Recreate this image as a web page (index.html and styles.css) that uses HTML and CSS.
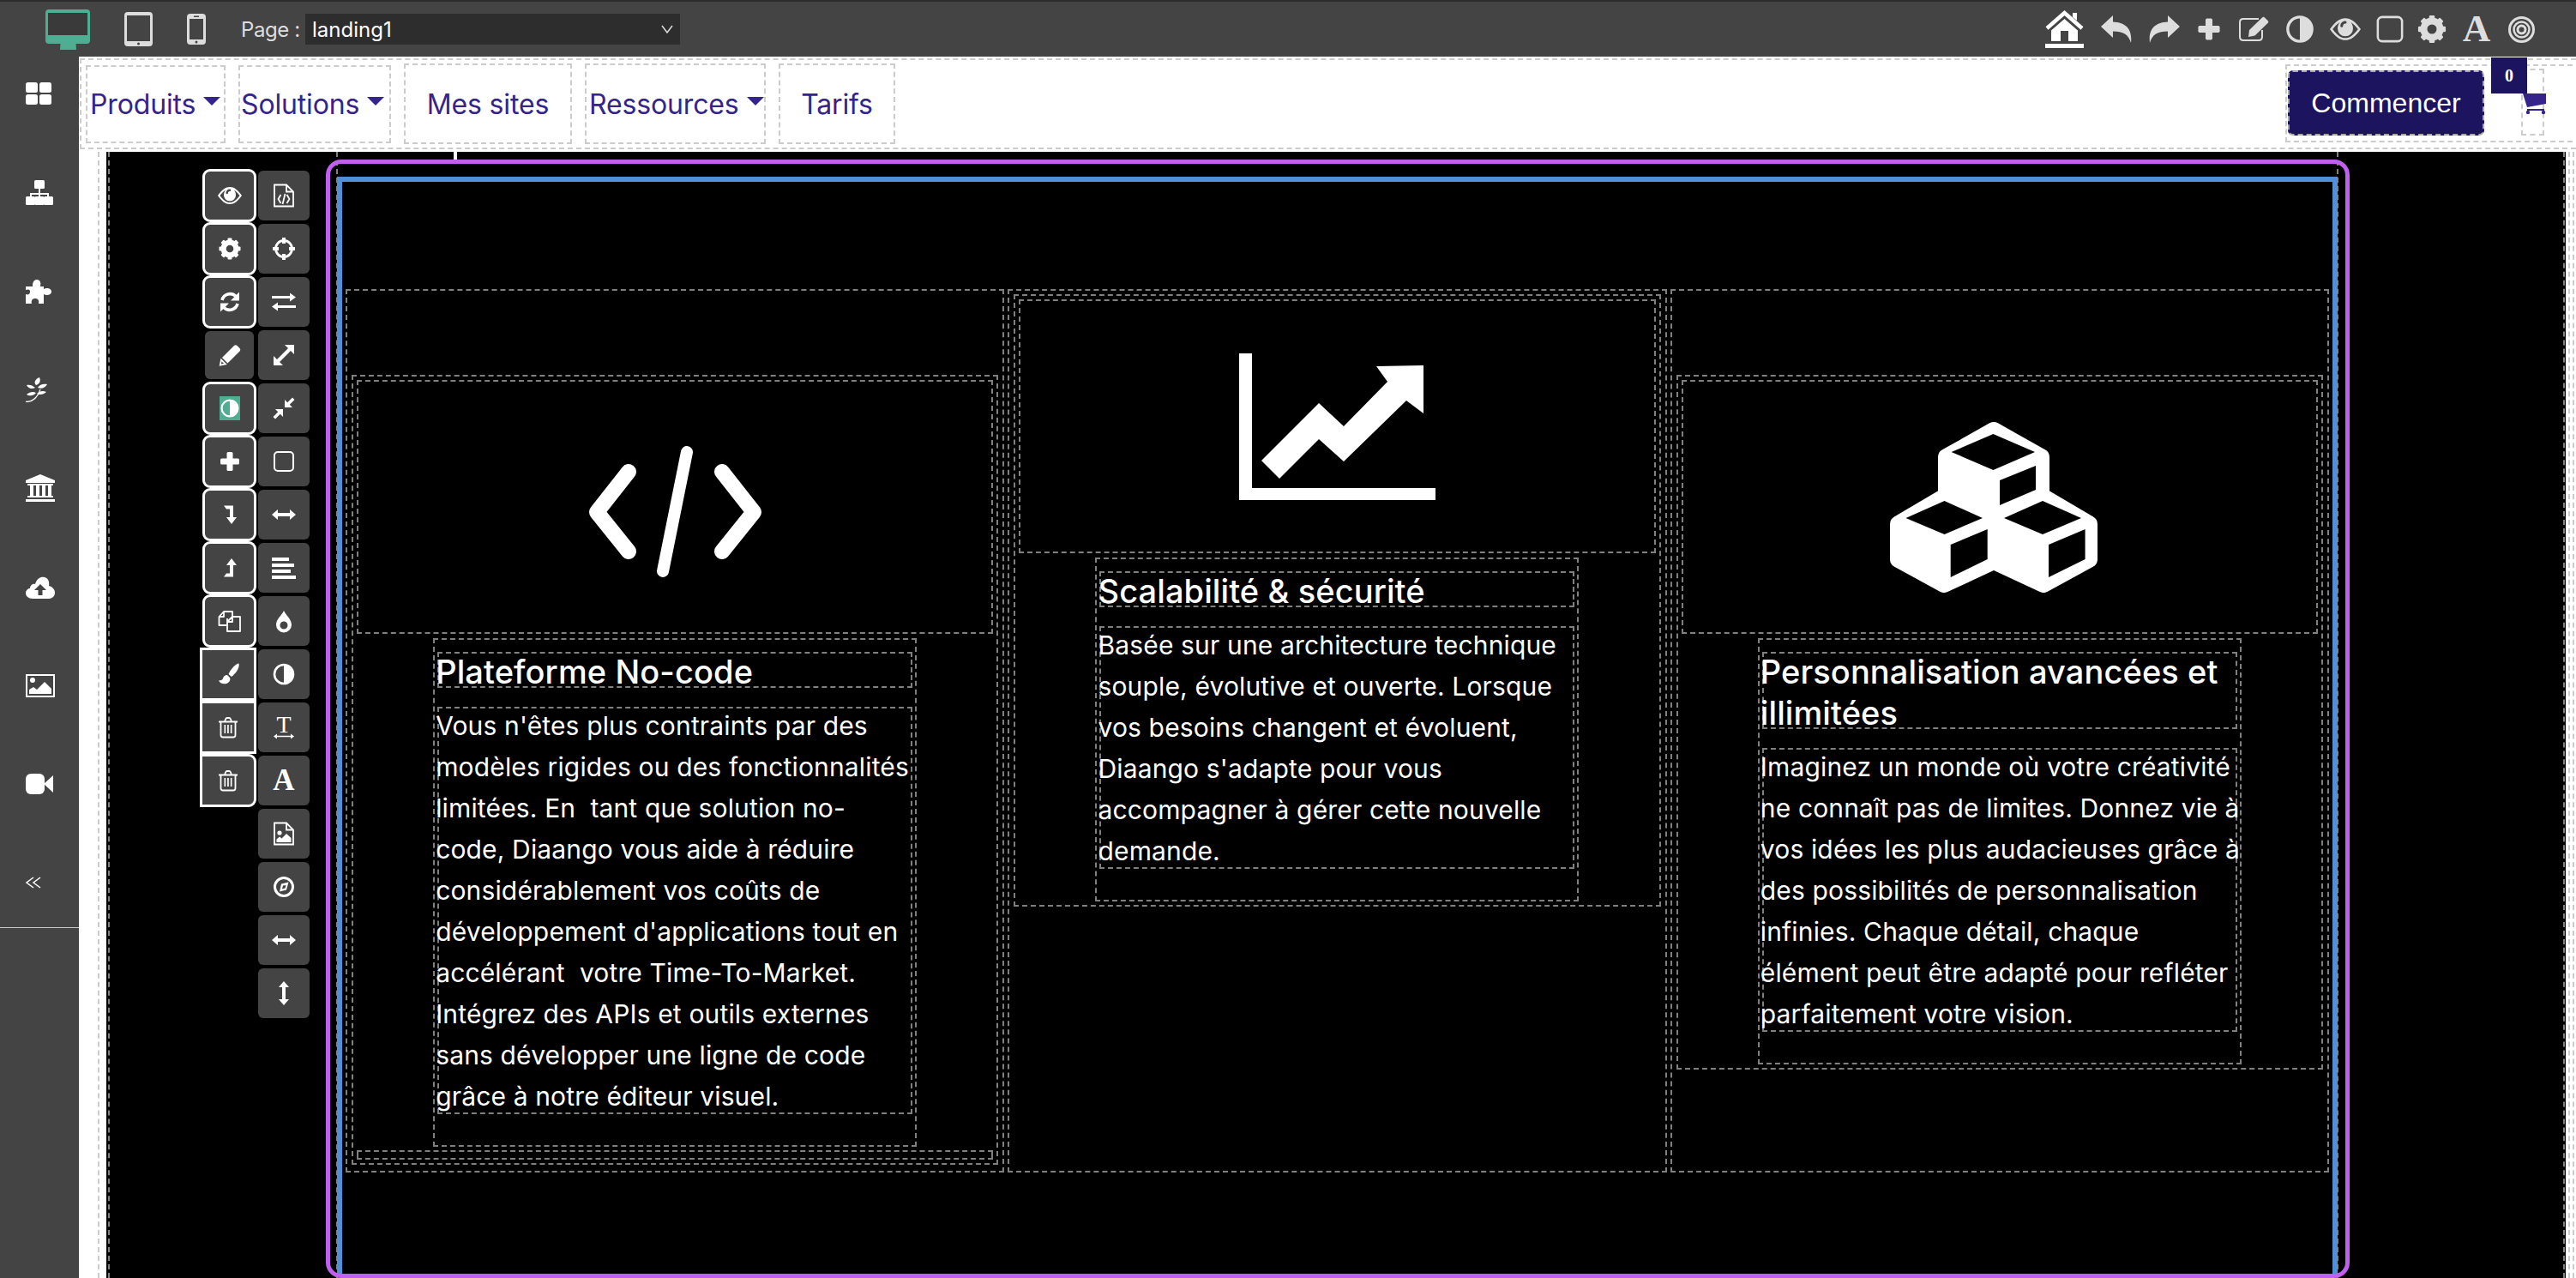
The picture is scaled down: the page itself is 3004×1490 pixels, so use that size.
FILE: index.html
```html
<!DOCTYPE html>
<html lang="fr">
<head>
<meta charset="utf-8">
<title>Diaango – landing1</title>
<link rel="stylesheet" href="styles.css">
</head>
<body>
<svg class="sprite" xmlns="http://www.w3.org/2000/svg">
  <symbol id="i-eye" viewBox="0 0 28 28"><path fill-rule="evenodd" d="M0 14C5 7 9 4 14 4s9 3 14 10c-5 7-9 10-14 10S5 21 0 14zM2.500 14c4 5.500 7.500 8 11.500 8s7.500-2.500 11.500-8c-2.200-3-4.300-5-6.500-6.300 1.200 1.500 2 3.500 2 5.800a7 7 0 0 1-14 0c0-2.300.8-4.300 2-5.800C6.800 9 4.700 11 2.500 14zM9.500 11a1.200 1.200 0 0 0 2.400 0c0-1 .8-2 2.100-2a1.200 1.200 0 0 0 0-2.400c-2.500 0-4.500 2-4.500 4.400z"/></symbol>
  <symbol id="i-cog" viewBox="0 0 28 28"><g><circle cx="14" cy="14" r="7.500" fill="none" stroke="currentColor" stroke-width="6"/><rect x="11.500" y="1.500" width="5" height="25" rx="1"/><rect x="11.500" y="1.500" width="5" height="25" rx="1" transform="rotate(45 14 14)"/><rect x="11.500" y="1.500" width="5" height="25" rx="1" transform="rotate(90 14 14)"/><rect x="11.500" y="1.500" width="5" height="25" rx="1" transform="rotate(135 14 14)"/><circle cx="14" cy="14" r="4.300" fill="#444"/></g></symbol>
  <symbol id="i-sync" viewBox="0 0 28 28"><path d="M5 12A9.500 9.500 0 0 1 21 7.500" fill="none" stroke="currentColor" stroke-width="3.600"/><path d="M25 2.500V12.500H15z"/><path d="M23 16A9.500 9.500 0 0 1 7 20.500" fill="none" stroke="currentColor" stroke-width="3.600"/><path d="M3 25.500V15.500H13z"/></symbol>
  <symbol id="i-pencil" viewBox="0 0 28 28"><path d="M5 17 19 3a2.500 2.500 0 0 1 3.500 0L25.500 6a2.500 2.500 0 0 1 0 3.500L11.500 23.500z"/><path d="M2.800 25.700 4 19.500 9 24.500z" fill="none" stroke="currentColor" stroke-width="1.800"/></symbol>
  <symbol id="i-adjust" viewBox="0 0 28 28"><circle cx="14" cy="14" r="11" fill="none" stroke="currentColor" stroke-width="2.600"/><path d="M14 3a11 11 0 0 1 0 22z"/></symbol>
  <symbol id="i-plus" viewBox="0 0 28 28"><rect x="3" y="10.500" width="22" height="7" rx="1.500"/><rect x="10.500" y="3" width="7" height="22" rx="1.500"/></symbol>
  <symbol id="i-ldown" viewBox="0 0 28 28"><path d="M7 3.500H18V17H22L16 25 10 17H14V7.500H10z"/></symbol>
  <symbol id="i-lup" viewBox="0 0 28 28"><path d="M7 24.500H18V11H22L16 3 10 11H14V20.500H10z"/></symbol>
  <symbol id="i-files" viewBox="0 0 28 28"><g fill="none" stroke="currentColor" stroke-width="1.800" stroke-linejoin="round"><path d="M10 19H1.500V9L7 3H17V9"/><path d="M7 3V9H1.500"/><path d="M11 11V26H26V9H17L11 15H17V9"/></g></symbol>
  <symbol id="i-brush" viewBox="0 0 28 28"><path d="M26.500 1.500c-3.500 0-10 7-12 12.500l3.500 3C22 14 28 7 26.500 1.500z"/><path d="M13 15c-3 0-4.500 2-5 4-.4 1.500-2 2.500-5 2.500 2 4 8 5 11 2.500 2.500-2 2.800-4 2-6z"/></symbol>
  <symbol id="i-trash" viewBox="0 0 28 28"><g fill="none" stroke="currentColor" stroke-width="1.800"><path d="M3 7.500H25M10 7.500 11 4.500Q11.500 3 13 3H15Q16.500 3 17 4.500L18 7.500"/><path d="M5.500 7.500V23Q5.500 25.500 8 25.500H20Q22.500 25.500 22.500 23V7.500"/></g><path d="M9.500 11h1.700v10H9.500zM13.100 11h1.700v10h-1.700zM16.800 11h1.700v10h-1.700z"/></symbol>
  <symbol id="i-code" viewBox="0 0 28 28"><g fill="none" stroke="currentColor" stroke-width="1.800"><path d="M3 1.500H17L25 9.500V26.500H3z"/><path d="M17 1.500V9.500H25"/><path d="M10.500 13 7.500 18 10.500 23M17.500 13 20.500 18 17.500 23M15.500 12 12.500 24"/></g></symbol>
  <symbol id="i-cross" viewBox="0 0 28 28"><circle cx="14" cy="14" r="9.500" fill="none" stroke="currentColor" stroke-width="2.800"/><path d="M12 1h4v7h-4zM12 20h4v7h-4zM1 12h7v4H1zM20 12h7v4h-7z"/></symbol>
  <symbol id="i-exchange" viewBox="0 0 28 28"><path d="M0 7H21V3.500L28 8.500 21 13.500V10H0zM28 18H7V14.500L0 19.500 7 24.500V21H28z"/></symbol>
  <symbol id="i-expand" viewBox="0 0 28 28"><path d="M15 2H26V13L22 9 9 22 13 26H2V15L6 19 19 6z"/></symbol>
  <symbol id="i-compress" viewBox="0 0 28 28"><path d="M15 13V4L18.200 7.200 24 1.500 26.500 4 20.800 9.800 24 13zM13 15V24L9.800 20.800 4 26.500 1.500 24 7.200 18.200 4 15z"/></symbol>
  <symbol id="i-square" viewBox="0 0 28 28"><rect x="3" y="3" width="22" height="22" rx="4" fill="none" stroke="currentColor" stroke-width="2"/></symbol>
  <symbol id="i-arrh" viewBox="0 0 28 28"><path d="M0 14 7 8V12H21V8L28 14 21 20V16H7V20z"/></symbol>
  <symbol id="i-arrv" viewBox="0 0 28 28"><path d="M14 0 20 7H16V21H20L14 28 8 21H12V7H8z"/></symbol>
  <symbol id="i-align" viewBox="0 0 28 28"><path d="M0 2h20v4H0zM0 9h26v4H0zM0 16h22v4H0zM0 23h28v4H0z"/></symbol>
  <symbol id="i-tint" viewBox="0 0 28 28"><path fill-rule="evenodd" d="M14 2C17 8 23 12 23 18.500A9 9 0 0 1 5 18.500C5 12 11 8 14 2zM14 14.500a4.500 4.500 0 1 0 0 9 4.500 4.500 0 0 0 0-9z"/></symbol>
  <symbol id="i-textw" viewBox="0 0 28 28"><text x="14" y="20" font-family="Liberation Serif" font-size="28" text-anchor="middle">T</text><path d="M2 24.500 6 21.500V23.800H22V21.500L26 24.500 22 27.500V25.200H6V27.500z"/></symbol>
  <symbol id="i-font" viewBox="0 0 28 28"><text x="14" y="25" font-family="Liberation Serif" font-weight="700" font-size="35" text-anchor="middle">A</text></symbol>
  <symbol id="i-fimg" viewBox="0 0 28 28"><g fill="none" stroke="currentColor" stroke-width="1.800"><path d="M3 1.500H17L25 9.500V26.500H3z"/><path d="M17 1.500V9.500H25"/></g><circle cx="9" cy="13" r="2.600"/><path d="M5.500 24V20.500L9 17.500 11.500 19.500 17 14 22.500 19V24z"/></symbol>
  <symbol id="i-compass" viewBox="0 0 28 28"><circle cx="14" cy="14" r="10.500" fill="none" stroke="currentColor" stroke-width="3"/><path d="M19.500 8.500 17 17.500 9 19.500 11 10.500z M13 12.500 12 16.500 15.500 15.500 16.500 12z" fill-rule="evenodd"/></symbol>
  <symbol id="i-target" viewBox="0 0 31 31"><g fill="none" stroke="currentColor"><circle cx="15.500" cy="15.500" r="14" stroke-width="3"/><circle cx="15.500" cy="15.500" r="9" stroke-width="2.500"/><circle cx="15.500" cy="15.500" r="4.500" stroke-width="3"/></g></symbol>
</svg>

<div class="app">
  <header class="topbar">
    <div class="devices">
      <svg class="ic-monitor" viewBox="0 0 52 47"><path d="M4 0H48A4 4 0 0 1 52 4V36A4 4 0 0 1 48 40H35.500L36 47H17L17.500 40H4A4 4 0 0 1 0 36V4A4 4 0 0 1 4 0z" fill="#4fae91"/><rect x="3" y="4" width="46" height="26" fill="#3a3a3a"/></svg>
      <svg class="ic-tablet" viewBox="0 0 33 40"><rect width="33" height="40" rx="4" fill="#ddd"/><rect x="3" y="4" width="27" height="30" fill="#444"/><circle cx="16.500" cy="37" r="1.500" fill="#444"/></svg>
      <svg class="ic-phone" viewBox="0 0 22 36"><rect width="22" height="36" rx="4" fill="#ddd"/><rect x="3" y="6" width="16" height="24" fill="#444"/><rect x="8" y="2.500" width="6" height="1.500" fill="#444"/><circle cx="11" cy="33" r="1.500" fill="#444"/></svg>
    </div>
    <div class="page-picker">
      <span class="page-label">Page :</span>
      <div class="page-select"><span>landing1</span><svg class="chev" viewBox="0 0 14 10"><path d="M1 1 7 9 13 1" fill="none" stroke="#ddd" stroke-width="1.500"/></svg></div>
    </div>
    <div class="top-actions">
      <svg class="ta ta-home" viewBox="0 0 45 44"><path d="M2 21 22.500 3 43 21" fill="none" stroke="#fff" stroke-width="4.500"/><path d="M32 3H37V12L32 8z" fill="#fff"/><path d="M22.500 10 38 23.500V36H27V24H18V36H7V23.500z" fill="#fff"/><rect y="39" width="45" height="5" fill="#fff"/></svg>
      <svg class="ta ta-undo" viewBox="0 0 36 32"><path d="M0 13 14 0V7.500C28 8 37 15 35 32 32 22 26 18.500 14 18.500V26z"/></svg>
      <svg class="ta ta-undo" viewBox="0 0 36 32"><path d="M36 13 22 0V7.500C8 8-1 15 1 32 4 22 10 18.500 22 18.500V26z"/></svg>
      <svg class="ta ta-plus"><use href="#i-plus"/></svg>
      <svg class="ta ta-edit" viewBox="0 0 37 30"><path d="M28 16V24Q28 28 24 28H6Q2 28 2 24V7Q2 3 6 3H24" fill="none" stroke="currentColor" stroke-width="2"/><path d="M13 16 28 1.500a2 2 0 0 1 3 0L34.500 5a2 2 0 0 1 0 3L19.500 22.500 12 24z"/></svg>
      <svg class="ta ta-adj"><use href="#i-adjust"/></svg>
      <svg class="ta ta-eye"><use href="#i-eye"/></svg>
      <svg class="ta ta-sq"><use href="#i-square"/></svg>
      <svg class="ta ta-cog"><use href="#i-cog"/></svg>
      <svg class="ta ta-font"><use href="#i-font"/></svg>
      <svg class="ta ta-tgt"><use href="#i-target"/></svg>
    </div>
  </header>

  <aside class="sidebar">
    <div class="si-slot"><svg class="si-th" viewBox="0 0 30 26"><rect width="14" height="12" rx="2.500"/><rect x="16" width="14" height="12" rx="2.500"/><rect y="14" width="14" height="12" rx="2.500"/><rect x="16" y="14" width="14" height="12" rx="2.500"/></svg></div>
    <div class="si-slot"><svg class="si-map" viewBox="0 0 32 29"><rect x="10" width="12" height="10" rx="1.500"/><path d="M15 10h2v5h10v5h-2v-3H17v3h-2v-3H7v3H5v-5h10z"/><rect y="19" width="11" height="10" rx="1.500"/><rect x="10.500" y="19" width="11" height="10" rx="1.500"/><rect x="21" y="19" width="11" height="10" rx="1.500"/></svg></div>
    <div class="si-slot"><svg class="si-puzzle" viewBox="0 0 30 29"><path d="M0 9H8C8 5 9 1 13 1S18 5 17 9H21V12C24 10 30 11 30 15S24 20 21 18V29H15C16 25 14 23 11 23S6 25 7 29H0V18C3 19 5 18 5 15S3 12 0 13z"/></svg></div>
    <div class="si-slot"><svg class="si-leaf" viewBox="0 0 25 29"><path d="M12 9C9 6 11 2 16 0 18 4 16 8 12 9zM11 12C8 9 4 8 1 9 3 13 7 14 11 12zM14 12C16 8 21 7 25 8 23 12 18 14 14 12zM1 20C4 17 9 16 12 18 9 22 4 22 1 20zM13 19C16 16 20 15 24 17 21 20 16 21 13 19z"/><path d="M0 28.500C8 28.500 14 23 17 14" fill="none" stroke="currentColor" stroke-width="1.300"/></svg></div>
    <div class="si-slot"><svg class="si-bank" viewBox="0 0 34 32"><path d="M17 0 34 7V10H0V7zM2 11H32V13H2zM5 13H9V25H5zM12 13H16V25H12zM19 13H23V25H19zM26 13H30V25H26zM2 25H32V27H2zM0 29H34V32H0z"/></svg></div>
    <div class="si-slot"><svg class="si-cloud" viewBox="0 0 34 27"><path fill-rule="evenodd" d="M8 27C3 27 0 24 0 20.500 0 17 3 15 5 15 5 11 9 9 11 10 13 3 18 1 22 2 26 3 28 7 27 12 31 13 34 16 34 20 34 24 31 27 27 27zM17 10 10 17H14.500V23H19.500V17H24z"/></svg></div>
    <div class="si-slot"><svg class="si-pic" viewBox="0 0 34 27"><path fill-rule="evenodd" d="M0 0H34V27H0zM2 2V25H32V2z"/><circle cx="8" cy="7" r="3"/><path d="M4 23V18L9 15 13 18 22 9 30 17V23z"/></svg></div>
    <div class="si-slot"><svg class="si-vid" viewBox="0 0 32 28"><rect y="2" width="22" height="24" rx="6"/><path d="M21 14 32 4V24z"/></svg></div>
    <div class="si-slot"><svg class="si-back" viewBox="0 0 18 14"><path d="M9 1 1 7 9 13M17 1 9 7 17 13" fill="none" stroke="#fff" stroke-width="1.500"/></svg></div>
    <div class="side-rule"></div>
  </aside>

  <main class="canvas">
    <nav class="nav">
      <a class="nav-item nav-produits">Produits<i class="caret"></i></a>
      <a class="nav-item nav-solutions">Solutions<i class="caret"></i></a>
      <a class="nav-item nav-tall nav-sites">Mes sites</a>
      <a class="nav-item nav-tall nav-ress">Ressources<i class="caret"></i></a>
      <a class="nav-item nav-tall nav-tarifs">Tarifs</a>
      <div class="nav-actions">
        <a class="cta"><span>Commencer</span></a>
        <div class="cart">
          <span class="badge">0</span>
          <svg class="cart-ic" viewBox="0 0 28 24"><path d="M0 0H27V12L5 16zM5 18H25V20H5z"/><circle cx="6" cy="22" r="2.200"/><circle cx="24" cy="22" r="2.200"/></svg>
        </div>
      </div>
    </nav>

    <div class="page-frame">
      <div class="page-frame-in">
        <div class="stage">
          <div class="stage-in">
            <section class="section">
              <div class="row">

                <div class="col col-low">
                  <div class="col-in">
                    <div class="icon-box"><svg class="big big-code" viewBox="0 0 205 153"><g fill="none" stroke="#fff" stroke-linecap="round" stroke-linejoin="round"><path d="M48 30 11 77 48 123M157 30 194 77 157 123" stroke-width="18"/><path d="M116 7 88 146" stroke-width="14"/></g></svg></div>
                    <div class="copy">
                      <h3 class="title"><span>Plateforme No-code</span></h3>
                      <div class="para"><p>Vous n'êtes plus contraints par des<br>modèles rigides ou des fonctionnalités<br>limitées. En &nbsp;tant que solution no-<br>code, Diaango vous aide à réduire<br>considérablement vos coûts de<br>développement d'applications tout en<br>accélérant &nbsp;votre Time-To-Market.<br>Intégrez des APIs et outils externes<br>sans développer une ligne de code<br>grâce à notre éditeur visuel.</p></div>
                    </div>
                    <div class="empty"></div>
                  </div>
                </div>

                <div class="col col-high">
                  <div class="col-in">
                    <div class="icon-box"><svg class="big big-chart" viewBox="0 0 229 171"><path fill="#fff" d="M0 0H15V157H229V171H0Z"/><path fill="#fff" d="M26 125 93 58 122 85 173 33 160 15 215 14V70L195 55 122 126 93 100 47 146Z"/></svg></div>
                    <div class="copy">
                      <h3 class="title"><span>Scalabilité &amp; sécurité</span></h3>
                      <div class="para"><p>Basée sur une architecture technique<br>souple, évolutive et ouverte. Lorsque<br>vos besoins changent et évoluent,<br>Diaango s'adapte pour vous<br>accompagner à gérer cette nouvelle<br>demande.</p></div>
                    </div>
                  </div>
                </div>

                <div class="col col-low">
                  <div class="col-in">
                    <div class="icon-box"><svg class="big big-cubes" viewBox="0 0 242 200"><path fill="#fff" stroke="#fff" stroke-width="20" stroke-linejoin="round" d="M121 11 66 42V87L10 120V161L63 190 121 163 179 190 232 161V120L176 87V42Z"/><path d="M120.400 15 169 36 120.400 57 71.600 36ZM170 52V80L128 98V69ZM63.500 93 108 113 63.500 132 18.500 113ZM113.700 126V161L70.700 182V144ZM178 93 223 113 178 132 133 113ZM227.600 126V161L185 182V144Z"/></svg></div>
                    <div class="copy">
                      <h3 class="title"><span>Personnalisation avancées et<br>illimitées</span></h3>
                      <div class="para"><p>Imaginez un monde où votre créativité<br>ne connaît pas de limites. Donnez vie à<br>vos idées les plus audacieuses grâce à<br>des possibilités de personnalisation<br>infinies. Chaque détail, chaque<br>élément peut être adapté pour refléter<br>parfaitement votre vision.</p></div>
                    </div>
                  </div>
                </div>

              </div>
            </section>
          </div>

          <span class="stub"></span>
          <div class="sel-blue"></div>
          <div class="sel-purple"></div>

          <div class="tools">
            <div class="tool-col">
              <button class="tb"><svg class="ti"><use href="#i-eye"/></svg></button>
              <button class="tb"><svg class="ti"><use href="#i-cog"/></svg></button>
              <button class="tb"><svg class="ti"><use href="#i-sync"/></svg></button>
              <button class="tb tb-plain"><svg class="ti"><use href="#i-pencil"/></svg></button>
              <button class="tb"><svg class="ti ti-green"><use href="#i-adjust"/></svg></button>
              <button class="tb"><svg class="ti"><use href="#i-plus"/></svg></button>
              <button class="tb"><svg class="ti"><use href="#i-ldown"/></svg></button>
              <button class="tb"><svg class="ti"><use href="#i-lup"/></svg></button>
              <button class="tb"><svg class="ti"><use href="#i-files"/></svg></button>
              <button class="tb tb-wide tb-sq"><svg class="ti"><use href="#i-brush"/></svg></button>
              <button class="tb tb-wide tb-sq"><svg class="ti"><use href="#i-trash"/></svg></button>
              <button class="tb tb-wide tb-end"><svg class="ti"><use href="#i-trash"/></svg></button>
            </div>
            <div class="tool-col tool-col-2">
              <button class="tc"><svg class="ti"><use href="#i-code"/></svg></button>
              <button class="tc"><svg class="ti"><use href="#i-cross"/></svg></button>
              <button class="tc"><svg class="ti"><use href="#i-exchange"/></svg></button>
              <button class="tc"><svg class="ti"><use href="#i-expand"/></svg></button>
              <button class="tc"><svg class="ti"><use href="#i-compress"/></svg></button>
              <button class="tc"><svg class="ti"><use href="#i-square"/></svg></button>
              <button class="tc"><svg class="ti"><use href="#i-arrh"/></svg></button>
              <button class="tc"><svg class="ti"><use href="#i-align"/></svg></button>
              <button class="tc"><svg class="ti"><use href="#i-tint"/></svg></button>
              <button class="tc"><svg class="ti"><use href="#i-adjust"/></svg></button>
              <button class="tc"><svg class="ti"><use href="#i-textw"/></svg></button>
              <button class="tc"><svg class="ti"><use href="#i-font"/></svg></button>
              <button class="tc"><svg class="ti"><use href="#i-fimg"/></svg></button>
              <button class="tc"><svg class="ti"><use href="#i-compass"/></svg></button>
              <button class="tc"><svg class="ti"><use href="#i-arrh"/></svg></button>
              <button class="tc"><svg class="ti"><use href="#i-arrv"/></svg></button>
            </div>
          </div>
        </div>
      </div>
    </div>
  </main>
</div>
</body>
</html>
```

FILE: styles.css
```css
* { box-sizing: border-box; }
html, body { margin: 0; height: 100%; overflow: hidden; }
body { font-family: "Inter", "Noto Sans", sans-serif; background: #444; }
.sprite { display: none; }
svg { display: block; fill: currentColor; }

.app { width: 3004px; height: 1490px; display: grid; grid-template-columns: 92px 1fr; grid-template-rows: 66px 1fr; overflow: hidden; }

/* Top bar */
.topbar { grid-column: 1 / -1; display: flex; align-items: center; background: #444; border-top: 2px solid #2c2c2c; padding-left: 53px; color: #ddd; }
.devices { display: flex; align-items: center; }
.ic-monitor { width: 52px; height: 47px; }
.ic-tablet { width: 33px; height: 40px; margin-left: 40px; }
.ic-phone { width: 22px; height: 36px; margin-left: 40px; }
.page-picker { display: flex; align-items: center; margin-left: 41px; }
.page-label { width: 75px; font-size: 24px; color: #ddd; letter-spacing: -0.4px; }
.page-select { width: 437px; height: 36px; background: #2d2d2d; display: flex; align-items: center; justify-content: space-between; padding: 0 8px 0 8px; color: #fff; font-size: 24px; }
.chev { width: 14px; height: 10px; }
.top-actions { margin-left: auto; margin-right: 48px; display: flex; align-items: center; gap: 20px; color: #ddd; }
.ta-home { width: 45px; height: 44px; }
.ta-undo { width: 36px; height: 32px; }
.ta-plus { width: 32px; height: 32px; margin: 0 -2px; }
.ta-edit { width: 37px; height: 30px; }
.ta-adj { width: 36px; height: 36px; margin: 0 -3px; }
.ta-eye { width: 36px; height: 36px; }
.ta-sq { width: 36px; height: 36px; margin: 0 -4px; }
.ta-cog { width: 36px; height: 36px; margin: 0 -3px; }
.ta-font { width: 36px; height: 36px; margin: 0 -1px; }
.ta-tgt { width: 31px; height: 31px; }

/* Sidebar */
.sidebar { background: #444; padding-top: 30px; display: flex; flex-direction: column; color: #fff; gap: 89px; }
.si-slot { height: 26px; padding-left: 30px; display: flex; align-items: center; flex: none; }
.si-th { width: 30px; height: 26px; flex: none; }
.si-map { width: 32px; height: 29px; flex: none; }
.si-puzzle { width: 30px; height: 29px; flex: none; }
.si-leaf { width: 25px; height: 29px; flex: none; }
.si-bank { width: 34px; height: 32px; flex: none; }
.si-cloud, .si-pic { width: 34px; height: 27px; flex: none; }
.si-vid { width: 32px; height: 28px; flex: none; }
.si-back { width: 18px; height: 14px; flex: none; }
.side-rule { width: 92px; height: 1px; background: #ccc; margin-top: -50px; flex: none; }

/* Canvas */
.canvas { background: #fff; display: flex; flex-direction: column; min-width: 0; min-height: 0; }
.nav { flex: none; height: 106px; margin: 2px 0 3px 1px; border: 2px dashed #ccc; border-right: 0; display: flex; align-items: center; padding-left: 5px; gap: 15px; position: relative; }
.nav-item { height: 91px; border: 2px dashed #ccc; color: #35248a; font-size: 32px; letter-spacing: -0.15px; display: flex; align-items: center; padding-left: 3px; white-space: nowrap; }
.nav-tall { height: 94px; justify-content: center; padding: 0; }
.nav-produits { width: 163px; }
.nav-solutions { width: 178px; padding-left: 1px; }
.nav-sites { width: 196px; }
.nav-ress { width: 211px; }
.nav-tarifs { width: 136px; }
.caret { width: 0; height: 0; margin-left: 9px; margin-top: -6px; border-left: 10px solid transparent; border-right: 10px solid transparent; border-top: 10px solid #35248a; }
.nav-ress { justify-content: flex-start; padding-left: 3px; }
.nav-actions { position: absolute; left: 2570px; top: 5px; width: 345px; height: 91px; border: 2px dashed #ccc; display: flex; }
.cta { margin: 5px 0 0 1px; width: 229px; height: 76px; background: #1d1460; border-radius: 6px; border: 2px dashed #aaa; outline: 0; color: #fff; font-family: "Liberation Sans", Arial, sans-serif; font-size: 32px; display: flex; align-items: center; justify-content: center; }
.cart { position: relative; margin: 3px 0 0 43px; width: 27px; height: 78px; border: 2px dashed #ccc; }
.badge { position: absolute; left: -37px; top: -15px; width: 42px; height: 42px; background: #1d1460; color: #fff; font: 700 20px "Liberation Serif", serif; display: flex; align-items: center; justify-content: center; }
.cart-ic { position: absolute; left: 0; top: 27px; width: 28px; height: 24px; color: #35248a; }

.page-frame { flex: 1; min-height: 0; margin: 0 2px 0 22px; border-left: 2px dashed #ccc; border-right: 2px dashed #ccc; padding-left: 8px; padding-right: 3px; }
.page-frame-in { height: 100%; border-right: 2px dashed #ccc; padding-right: 3px; }
.stage { position: relative; height: 100%; background: #000; padding: 0 1px 0 2px; overflow: hidden; }
.stage-in { height: 100%; border-left: 2px dashed #808080; border-right: 2px dashed #808080; }

/* Section */
.section { margin-left: 264px; width: 2335px; height: 100%; border-left: 2px dashed #808080; border-right: 2px dashed #808080; padding: 160px 9px 0 9px; }
.row { display: grid; grid-template-columns: repeat(3, 1fr); gap: 4px; height: 1030px; }
.col { border: 2px dashed #808080; padding: 0 5px; }
.col-low { padding-top: 98px; }
.col-high { padding-top: 4px; }
.col-in { border: 2px dashed #808080; padding: 4px 4px 4px; }
.icon-box { height: 296px; border: 2px dashed #808080; display: flex; align-items: center; justify-content: center; }
.big { display: block; }
.big-code { width: 205px; height: 153px; margin-top: 11px; }
.big-chart { width: 229px; height: 171px; }
.big-cubes { width: 242px; height: 200px; margin-right: 13px; }
.copy { width: 564px; margin: 5px auto 0; border: 2px dashed #808080; padding: 14px 3px 36px; }
.title { margin: 0; border: 2px dashed #808080; font-weight: 500; font-size: 38px; letter-spacing: 0.1px; line-height: 48px; color: #fff; }
.title span { display: block; margin: -3px -4px -7px; white-space: nowrap; }
.para { margin-top: 22px; border: 2px dashed #808080; }
.para p { margin: -4px -4px -5px; font-size: 30px; letter-spacing: 0.15px; line-height: 48px; color: #fff; white-space: nowrap; }
.empty { height: 11px; margin-top: 4px; border: 2px dashed #808080; }

/* Selection overlays */
.stub { position: absolute; left: 405px; top: 0; width: 4px; height: 10px; background: #fff; }
.sel-blue { position: absolute; left: 269px; top: 29px; width: 2333px; height: 1282px; border: 6px solid #4f90d9; border-bottom: 0; }
.sel-purple { position: absolute; left: 256px; top: 9px; width: 2360px; height: 1304px; border: 5px solid #c05ff0; border-radius: 18px; }

/* Floating tool panel */
.tools { position: absolute; left: 112px; top: 20px; display: flex; gap: 3px; color: #fff; }
.tool-col { display: flex; flex-direction: column; width: 62px; }
.tool-col-2 { width: 60px; padding-top: 2px; gap: 4px; }
.tb, .tc { padding: 0; margin: 0; background: #444; display: flex; align-items: center; justify-content: center; color: #fff; }
.tb { height: 62px; width: 63px; border: 3px solid #fff; border-radius: 9px; background-clip: padding-box; }
.tb-plain { border-color: transparent; }
.tb-wide { width: 66px; margin-left: -3px; }
.tb-sq { border-radius: 0; }
.tb-end { border-radius: 0 9px 9px 0; }
.tc { height: 58px; width: 60px; border: 0; border-radius: 6px; }
.ti { width: 28px; height: 28px; }
.ti-green { background: #4fae91; width: 24px; }
```
